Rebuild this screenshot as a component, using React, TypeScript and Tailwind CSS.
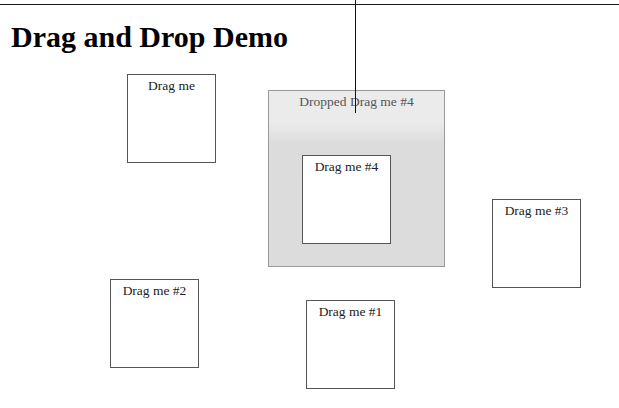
const boxes = [
  { label: "Drag me", left: 127, top: 74 },
  { label: "Drag me #3", left: 492, top: 199 },
  { label: "Drag me #2", left: 110, top: 279 },
  { label: "Drag me #1", left: 306, top: 300 },
];

function DragBox({ label, className = "" }: { label: string; className?: string }) {
  return (
    <div
      className={`w-[89px] h-[89px] border border-[#555] bg-white pt-px text-center text-[13.5px] text-[#222] ${className}`}
    >
      {label}
    </div>
  );
}

export default function App() {
  return (
    <div
      className="relative w-[619px] h-[408px] overflow-hidden bg-white"
      style={{ fontFamily: '"Liberation Serif", "Times New Roman", serif' }}
    >
      {/* top rule */}
      <div className="pt-1">
        <div className="h-px bg-[#1a1a1a]" />
      </div>

      <h1 className="mt-[17px] pl-[11px] text-[30px] leading-[30px] font-bold text-black">
        Drag and Drop Demo
      </h1>

      {/* free canvas of draggable boxes */}
      {boxes.map((b) => (
        <div key={b.label} className="absolute" style={{ left: b.left, top: b.top }}>
          <DragBox label={b.label} />
        </div>
      ))}

      {/* drop zone */}
      <div className="absolute left-[268px] top-[90px] w-[177px] h-[177px] border border-[#999] bg-gradient-to-b from-[#ebebeb] from-[18%] to-[#dcdcdc] to-[30%] pt-px text-center text-[13.5px] text-[#555]">
        Dropped Drag me #4
        <div className="absolute left-[33px] top-[64px]">
          <DragBox label="Drag me #4" />
        </div>
      </div>

      {/* vertical guide line */}
      <div className="absolute left-[355px] top-0 w-px h-[113px] bg-[#111]" />
    </div>
  );
}
